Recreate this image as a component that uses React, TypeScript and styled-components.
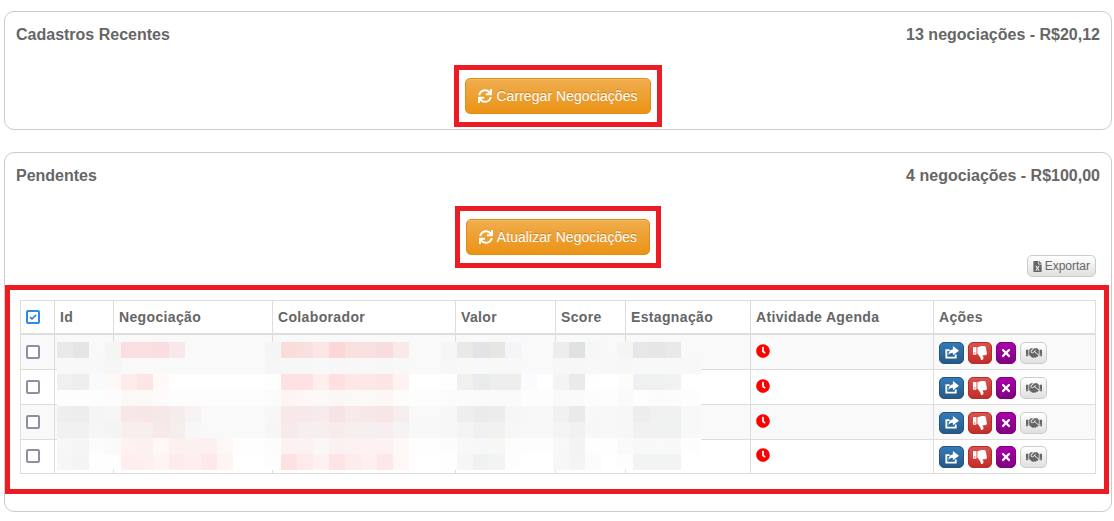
import React from 'react';
import styled, { createGlobalStyle } from 'styled-components';
import { FaSync, FaClock, FaThumbsDown, FaTimes, FaHandshake, FaFileExcel } from 'react-icons/fa';

const columns = [34, 59, 159, 183, 100, 70, 125, 183, 162];
const headers = ['Id', 'Negociação', 'Colaborador', 'Valor', 'Score', 'Estagnação', 'Atividade Agenda', 'Ações'];

// dados borrados no print, um bloco de 16px por cor
const blur = [
    'e9eae7 e3e5e7 f9f9f9 f5f5f2 f9dfe1 f9dfe1 f9dde0 f9e8e9 f9f9f9 f9f9f9 f9f9f9 f9f9f9 f9f9f9 f6f5f6 fadddb f9e0e0 fbe7e6 fbd8d7 f9e0df f9e0e0 f9dcde f9e9e8 f9f9f9 f9f9f9 f6f6f6 e9e9e6 e2e3e6 e6e6e3 f4f5f8 f9f9f9 f9f9f9 eeedeb e0e2e1 f6f8f7 f9f9f9 f6f5f2 e6e7e9 e6e6e6 e8e9e8 f9f9f9 f9f9f9',
    'f8f8f8 f8f8f8 f8f8f8 f6f6f6 f9f9f9 f9f9f9 f9f9f9 f9f9f9 f9f9f9 f9f9f9 f9f9f9 f9f9f9 f9f9f9 f6f6f7 f8f7f7 f8f7f7 f8f8f8 f8f7f7 f8f7f7 f8f8f8 f8f7f7 f8f8f8 f9f9f9 f9f9f9 f7f7f7 f8f8f8 f8f8f8 f8f8f8 f8f8f8 f9f9f9 f9f9f9 f7f7f7 f7f7f7 f8f8f8 f8f8f8 f7f7f7 f8f8f8 f8f8f8 f8f8f8 f8f8f8 f8f8f8',
    'f0f0f0 eeeeee f8fafc fef9f7 feecec fee5e5 fff9f7 ffffff ffffff ffffff ffffff ffffff ffffff fefefe fee1e2 fee1e2 feeeec fee0e0 fee7e7 fee8e7 fee5e5 fff2f3 ffffff ffffff fefefe f0f0ed eaebed edefee eeeeec fafbfe ffffff f5f4f2 e9ebea fefefe ffffff fdfcf9 eef0f2 eff0f0 f1f2f3 ffffff ffffff',
    'fdfdfd fdfdfd fdfdfd fcfcfc fcf8f6 fbf9f6 fcfafa fdfdfd fdfdfd fdfdfd fdfdfd fdfdfd fdfdfd fbfbfb fdf5f4 fdf7f5 fcf8f8 fcf6f4 fcf8f6 fcfaf7 fcf7f5 fefbfb fdfdfd fdfdfd fbfbfb fbfbfb fafafa fafafa fafafa fdfdfd fdfdfd f9f9f9 fafafa fcfcfc fdfdfd fafafa fcfdfc fbfbfb fbfcfb fdfdfd fdfdfd',
    'eeeeee ededed f5f5f5 f6f6f6 f8e7e8 f8e5e6 f6e8e9 f5ecec f7f3f4 f9f9f9 f9f9f9 f9f9f9 f9f9f9 f7f7f7 f8e8e9 f7e9ea f6eceb f7e3e6 f7ebea f7e7e9 f8e6e6 f6eeee f9f9f9 f9f9f9 f7f7f7 eeeeee ebebec ececed f6f6f6 f8f8f8 f8f8f8 f1f1f1 e9eaec f8f8f8 f8f8f8 f7f7f7 ecedef f0f0f0 eff0f0 f8f8f8 f8f8f8',
    'f1f1f1 f0f0f0 f6f6f6 f5f4f5 f7eeee f7efee f7e9e9 f6eeec f7f7f7 f9f9f9 f9f9f9 f9f9f9 f9f9f9 f7f5f6 f8e9ea f6efef f7eeee f7ebec f7eeee f6eff0 f7edee f6f3f4 f8f8f8 f8f8f8 f7f7f7 f4f4f4 f0f0f0 f1f1f0 f7f7f7 f8f8f8 f8f8f8 f4f4f2 f1f1f1 f7f7f7 f8f8f8 f7f7f5 f1f1f2 f0f1f1 f0f1f2 f8f8f8 f8f8f8',
    'f7f7f7 f5f5f5 fcfcfc fafafa fdf1f1 fcf1f0 fdf7f6 fdf1ef fcf1f1 fdf0f0 fdf7f5 fefefe fefefe fcfcfc fdf1f1 fdf2f2 fbf7f6 fcf1f1 fcf2f2 fdf2f2 fdf1f1 fdf7f6 fefefe fefefe fcfcfc f8f8f8 f6f7f9 f7f8f5 fdfdfd fdfdfd fdfdfd f8f8f8 f3f3f3 fefefe fefefe fafafa f8f8f8 f9f9f9 f8f8f8 fdfdfd fdfdfd',
    'f6f6f6 f4f4f4 fefefe fefefe feeeee fef0f0 fef4f3 feecec feeeee fee8e9 fef4f2 ffffff ffffff fefcfc fee2e2 feeaea fdf1f1 fee4e4 feecec fef0f0 fee7e8 fff6f6 ffffff ffffff fefefe f6f6f6 f0f2f1 f3f3f3 fcfdfe ffffff ffffff f7f7f7 f4f4f4 fcfcfc ffffff fdfdfb f2f3f5 f2f3f3 f2f3f3 ffffff ffffff',
];

function ShareIcon() {
    return (
        <svg width="15" height="15" viewBox="0 0 16 16">
            <path d="M12.5 10v3.5H2.5V5.5H6" fill="none" stroke="currentColor" strokeWidth="2" />
            <path d="M9.5 1L16 6l-6.5 5V8.2C7 8.2 5.4 9 4.8 11.2 4.6 7.6 6.200 5 9.500 4.600z" fill="currentColor" />
        </svg>
    );
}

function App() {
    return (
        <Page>
            <GlobalStyle />
            <Panel>
                <PanelHeader>
                    <span>Cadastros Recentes</span>
                    <span>13 negociações - R$20,12</span>
                </PanelHeader>
                <Center>
                    <Highlight>
                        <LoadButton><FaSync size={14} /> Carregar Negociações</LoadButton>
                    </Highlight>
                </Center>
            </Panel>

            <Panel>
                <PanelHeader>
                    <span>Pendentes</span>
                    <span>4 negociações - R$100,00</span>
                </PanelHeader>
                <Center>
                    <Highlight>
                        <LoadButton><FaSync size={14} /> Atualizar Negociações</LoadButton>
                    </Highlight>
                </Center>
                <ExportRow>
                    <ExportButton><FaFileExcel size={11} /> Exportar</ExportButton>
                </ExportRow>
                <TableFrame>
                    <TableWrap>
                        <Table>
                            <colgroup>
                                {columns.map((w, i) => <col key={i} width={w} />)}
                            </colgroup>
                            <thead>
                                <tr>
                                    <Th><Check type="checkbox" defaultChecked /></Th>
                                    {headers.map((h) => <Th key={h}>{h}</Th>)}
                                </tr>
                            </thead>
                            <tbody>
                                {[0, 1, 2, 3].map((row) => (
                                    <Row key={row}>
                                        <Td><Check type="checkbox" /></Td>
                                        <Td /><Td /><Td /><Td /><Td /><Td />
                                        <Td><FaClock size={14} color="#ff0000" /></Td>
                                        <Td>
                                            <Actions>
                                                <ActionButton $kind="blue"><ShareIcon /></ActionButton>
                                                <ActionButton $kind="red"><FaThumbsDown size={14} /></ActionButton>
                                                <ActionButton $kind="purple"><FaTimes size={12} /></ActionButton>
                                                <ActionButton $kind="gray"><FaHandshake size={16} /></ActionButton>
                                            </Actions>
                                        </Td>
                                    </Row>
                                ))}
                            </tbody>
                        </Table>
                        <Blur width="644" height="128" shapeRendering="crispEdges">
                            {blur.map((line, y) => line.split(' ').map((c, x) => (
                                <rect key={`${x}-${y}`} x={x * 16} y={y * 16} width="16" height="16" fill={`#${c}`} />
                            )))}
                        </Blur>
                    </TableWrap>
                </TableFrame>
            </Panel>
        </Page>
    );
}

const GlobalStyle = createGlobalStyle`
    html, body {
        margin: 0;
        background: #fff;
        font-family: "Liberation Sans", Arial, sans-serif;
    }
`;

const Page = styled.div`
    display: flex;
    flex-direction: column;
    gap: 22px;
    box-sizing: border-box;
    width: 1114px;
    height: 521px;
    padding: 11px 2px 9px 4px;
    overflow: hidden;
`;

const Panel = styled.section`
    box-sizing: border-box;
    border: 1px solid #ccc;
    border-radius: 10px;
    padding-bottom: 2px;
    background: #fff;

    &:last-child {
        padding-bottom: 17px;
    }
`;

const PanelHeader = styled.header`
    display: flex;
    justify-content: space-between;
    padding: 13px 11px 0;
    height: 40px;
    line-height: 20px;
    font-size: 16px;
    font-weight: bold;
    color: #666;
`;

const Center = styled.div`
    display: flex;
    justify-content: center;
`;

const Highlight = styled.div`
    display: flex;
    padding: 8px 6px;
    border: 5px solid #ed1c24;
`;

const LoadButton = styled.button`
    display: inline-flex;
    align-items: center;
    gap: 4px;
    height: 36px;
    padding: 0 12px;
    border: 1px solid #e38d13;
    border-radius: 5px;
    background: linear-gradient(to bottom, #f0ad4e 0%, #eb9316 100%);
    color: #fff;
    font-family: inherit;
    font-size: 14px;
    letter-spacing: .05px;
    text-shadow: 0 -1px 0 rgba(0, 0, 0, .2);
    box-shadow: inset 0 1px 0 rgba(255, 255, 255, .15);
`;

const ExportRow = styled.div`
    display: flex;
    justify-content: flex-end;
    margin: -13px 15px 8px 0;
`;

const ExportButton = styled.button`
    display: inline-flex;
    align-items: center;
    gap: 2px;
    height: 22px;
    padding: 0 5px 0 4px;
    border: 1px solid #ccc;
    border-radius: 5px;
    background: linear-gradient(to bottom, #fff 0%, #e0e0e0 100%);
    color: #666;
    font-family: inherit;
    font-size: 12px;
`;

const TableFrame = styled.div`
    margin: 0 2px 0 0;
    padding: 10px 8px 15px 10px;
    border: 5px solid #ed1c24;
`;

const TableWrap = styled.div`
    position: relative;
`;

const Table = styled.table`
    width: 1075px;
    table-layout: fixed;
    border-collapse: collapse;
    color: #666;
`;

const Th = styled.th`
    height: 32px;
    padding: 0 5px;
    border: 1px solid #ddd;
    border-bottom-width: 2px;
    font-size: 14px;
    letter-spacing: .35px;
    text-align: left;
`;

const Row = styled.tr`
    &:nth-child(odd) {
        background: #f9f9f9;
    }
`;

const Td = styled.td`
    height: 33.85px;
    padding: 0 5px;
    border: 1px solid #ddd;

    & > svg {
        display: block;
        margin-top: -2px;
    }
`;

const Check = styled.input`
    display: block;
    appearance: none;
    box-sizing: border-box;
    width: 14px;
    height: 14px;
    margin: 0;
    border: 2px solid #8f8ea3;
    border-radius: 2px;
    background: #fff;

    &:checked {
        border-color: #2a8ce8;
        background: #fff url("data:image/svg+xml,%3Csvg xmlns='http://www.w3.org/2000/svg' viewBox='0 0 10 10'%3E%3Cpath d='M2 5l2 2 4-4' fill='none' stroke='%232a6fc9' stroke-width='1.5'/%3E%3C/svg%3E") center / 10px no-repeat;
    }
`;

const Actions = styled.div`
    display: flex;
    gap: 4px;
    margin-top: 2px;
`;

const kinds = {
    blue: { w: 25, from: '#337ab7', to: '#265a88', line: '#245580', fg: '#fff' },
    red: { w: 24, from: '#d9534f', to: '#c12e2a', line: '#b92c28', fg: '#fff' },
    purple: { w: 20, from: '#a0a', to: '#800080', line: '#800080', fg: '#fff' },
    gray: { w: 27, from: '#fff', to: '#e0e0e0', line: '#ccc', fg: '#666' },
};

const ActionButton = styled.button<{ $kind: keyof typeof kinds }>`
    display: flex;
    align-items: center;
    justify-content: center;
    box-sizing: border-box;
    width: ${(p) => kinds[p.$kind].w}px;
    height: 22px;
    padding: 0;
    border: 1px solid ${(p) => kinds[p.$kind].line};
    border-radius: 5px;
    background: linear-gradient(to bottom, ${(p) => kinds[p.$kind].from} 0%, ${(p) => kinds[p.$kind].to} 100%);
    color: ${(p) => kinds[p.$kind].fg};
`;

const Blur = styled.svg`
    position: absolute;
    left: 37px;
    top: 42px;
`;

export default App;
